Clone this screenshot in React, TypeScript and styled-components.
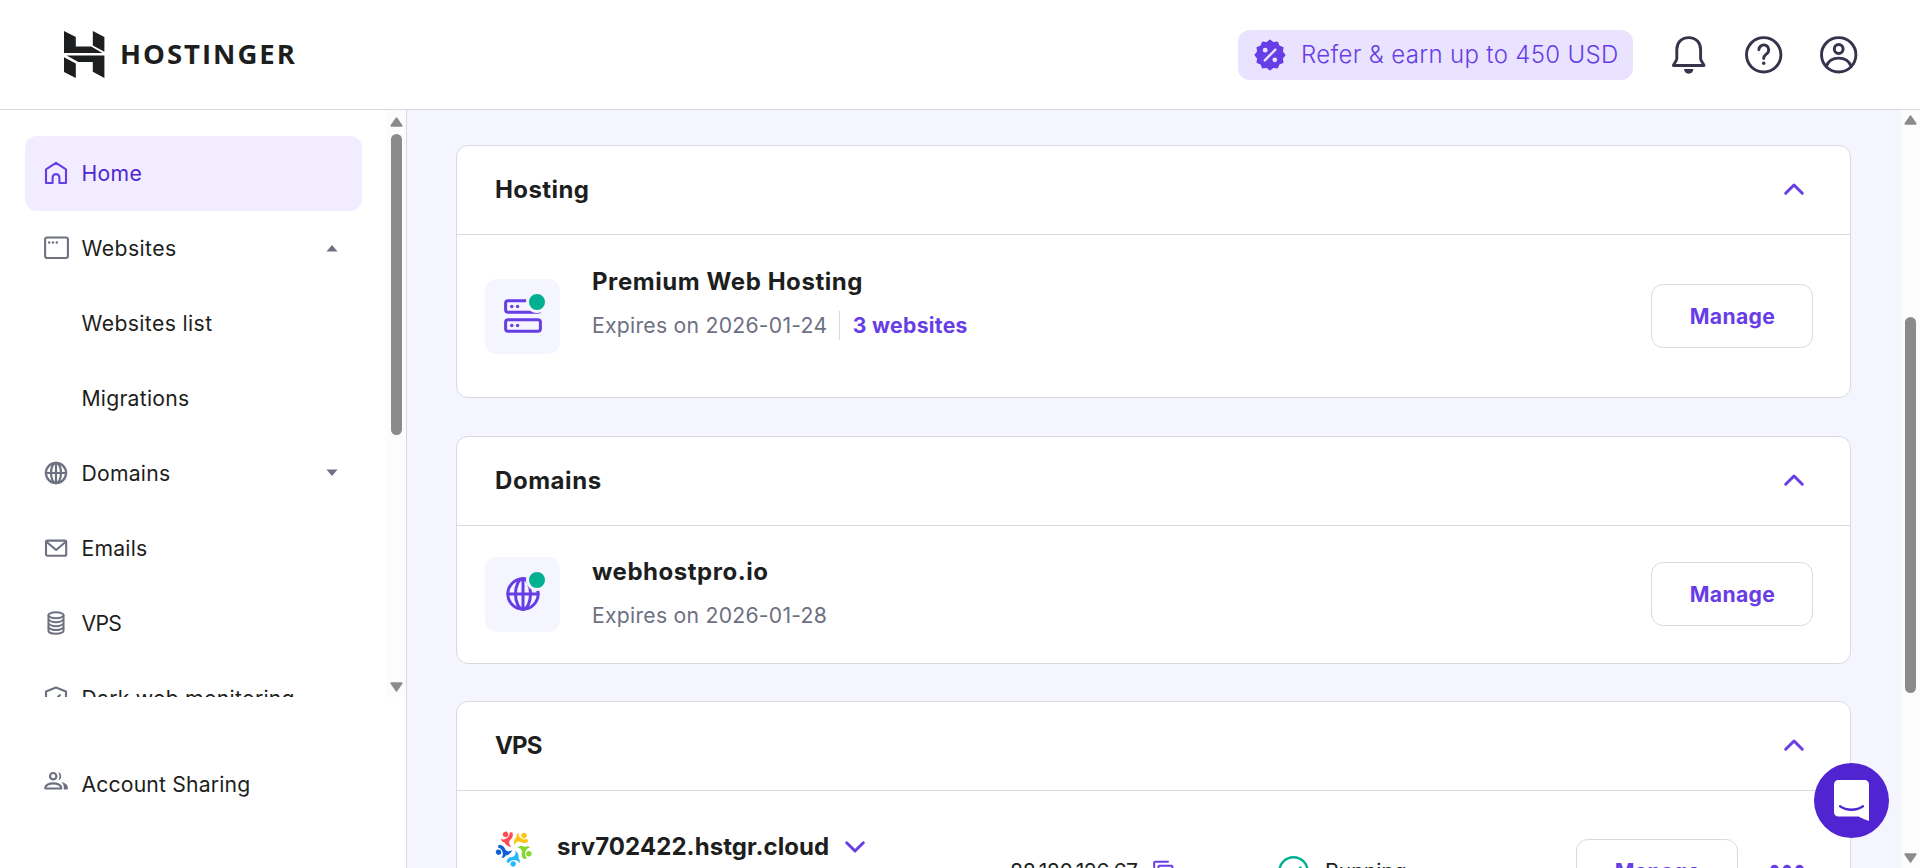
import React from "react";
import styled, { createGlobalStyle } from "styled-components";

const color = {
  primary: "#673de6",
  primaryDark: "#5025d1",
  primaryLight: "#e9e3ff",
  active: "#f1ecff",
  page: "#f4f5ff",
  border: "#d8dae0",
  dark: "#1d1e20",
  gray: "#6d7081",
  icon: "#36344d",
  success: "#00b090",
  track: "#fcfcfc",
  thumb: "#8b8b8b",
};

const GlobalStyle = createGlobalStyle`
  * { box-sizing: border-box; }
  body {
    margin: 0;
    overflow: hidden;
    background: #fff;
    color: ${color.dark};
    font-family: Inter, "Liberation Sans", sans-serif;
  }
  svg { display: block; flex: none; }
`;

const Page = styled.div`
  display: flex;
  flex-direction: column;
  width: 1920px;
  height: 868px;
  overflow: hidden;
`;

const Header = styled.header`
  display: flex;
  align-items: center;
  flex: none;
  height: 110px;
  padding: 0 62px 0 64px;
  border-bottom: 1px solid ${color.border};
`;

const Logo = styled.div`
  display: flex;
  align-items: center;
  gap: 15px;
  font: 700 27.5px/46px "Open Sans", sans-serif;
  letter-spacing: 2px;
`;

const LogoText = styled.span`
  padding-bottom: 2px;
`;

const HeaderActions = styled.div`
  display: flex;
  align-items: center;
  gap: 37px;
  margin-left: auto;
`;

const ReferPill = styled.button`
  display: flex;
  align-items: center;
  width: 395px;
  height: 50px;
  padding: 0 0 0 16px;
  gap: 15px;
  border: 0;
  border-radius: 12px;
  background: ${color.primaryLight};
  color: ${color.primary};
  font: 340 24px/50px Inter, sans-serif;
  letter-spacing: 0.34px;
  white-space: nowrap;
`;

const Body = styled.div`
  display: flex;
  flex: 1;
  min-height: 0;
`;

const Sidebar = styled.aside`
  display: flex;
  flex-direction: column;
  flex: none;
  width: 407px;
  border-right: 1px solid ${color.border};
`;

const NavScroller = styled.div`
  display: flex;
  height: 587px;
  overflow: hidden;
`;

const NavList = styled.nav`
  display: flex;
  flex-direction: column;
  flex: 1;
  padding: 26px 25px 0;
`;

const NavItem = styled.a<{ $active?: boolean; $spacing: number }>`
  display: flex;
  align-items: center;
  flex: none;
  gap: 12.5px;
  height: 75px;
  padding: 0 24px 1px 19px;
  border-radius: 12px;
  background: ${(p) => (p.$active ? color.active : "transparent")};
  color: ${(p) => (p.$active ? color.primaryDark : color.dark)};
  font-size: 21.2px;
  font-weight: 420;
  letter-spacing: ${(p) => p.$spacing}px;
  white-space: nowrap;
`;

const NavIcon = styled.span<{ $active?: boolean; $lift?: boolean }>`
  display: flex;
  width: 25px;
  padding-bottom: ${(p) => (p.$lift ? 6 : 0)}px;
  color: ${(p) => (p.$active ? color.primary : color.gray)};
`;

const NavCaret = styled.span`
  margin-left: auto;
  color: ${color.gray};
`;

const SidebarFooter = styled.div`
  padding: 50px 44px 0 25px;
`;

const Track = styled.div<{ $arrowInset: number }>`
  display: flex;
  flex-direction: column;
  align-items: center;
  flex: none;
  width: 19px;
  padding: ${(p) => p.$arrowInset}px 0 5px;
  background: ${color.track};
  color: ${color.thumb};
`;

const Thumb = styled.div<{ $top: number; $height: number }>`
  width: 11px;
  height: ${(p) => p.$height}px;
  margin: ${(p) => p.$top}px 0 auto;
  border-radius: 6px;
  background: ${color.thumb};
`;

const Main = styled.main`
  flex: 1;
  display: flex;
  flex-direction: column;
  gap: 38px;
  padding: 35px 50px 0 49px;
  background: ${color.page};
  overflow: hidden;
`;

const Card = styled.section<{ $height: number }>`
  flex: none;
  height: ${(p) => p.$height}px;
  border: 1px solid ${color.border};
  border-radius: 12px;
  background: #fff;
`;

const CardHeader = styled.div<{ $spacing: number }>`
  display: flex;
  align-items: center;
  justify-content: space-between;
  height: 89px;
  padding: 0 45px 2px 38px;
  border-bottom: 1px solid ${color.border};
  font-size: 24px;
  font-weight: 650;
  letter-spacing: ${(p) => p.$spacing}px;
`;

const ServiceRow = styled.div<{ $height: number; $lift?: number }>`
  display: flex;
  align-items: center;
  height: ${(p) => p.$height}px;
  padding: 0 37px ${(p) => p.$lift ?? 0}px 28px;
`;

const IconTile = styled.div`
  position: relative;
  display: flex;
  align-items: center;
  justify-content: center;
  width: 75px;
  height: 75px;
  margin-right: 32px;
  border-radius: 12px;
  background: ${color.page};
  color: ${color.primary};
`;

const StatusDot = styled.span`
  position: absolute;
  top: 12px;
  right: 12px;
  width: 22px;
  height: 22px;
  border: 3px solid ${color.page};
  border-radius: 50%;
  background: ${color.success};
`;

const ServiceInfo = styled.div<{ $lift: number }>`
  display: flex;
  flex-direction: column;
  gap: 7px;
  margin-right: auto;
  padding-bottom: ${(p) => p.$lift}px;
`;

const ServiceTitle = styled.div<{ $spacing: number }>`
  font-size: 24px;
  font-weight: 650;
  line-height: 36px;
  letter-spacing: ${(p) => p.$spacing}px;
  white-space: nowrap;
`;

const ServiceMeta = styled.div`
  display: flex;
  align-items: center;
  height: 36px;
  color: ${color.gray};
  font-size: 21.2px;
  letter-spacing: 0.25px;
`;

const MetaLink = styled.a`
  margin-left: 12px;
  padding-left: 12.5px;
  border-left: 1px solid ${color.border};
  color: ${color.primary};
  font-weight: 650;
  line-height: 29px;
  letter-spacing: 0.28px;
`;

const ManageButton = styled.button`
  width: 162px;
  height: 64px;
  padding: 0 0 1px 1px;
  border: 1px solid ${color.border};
  border-radius: 12px;
  background: #fff;
  color: ${color.primary};
  font: 650 21.2px Inter, sans-serif;
  letter-spacing: 0.3px;
`;

const VpsCard = styled(Card)`
  margin-top: -1px;
`;

const VpsRow = styled.div`
  display: flex;
  align-items: center;
  height: 160px;
  padding: 0 46px 0 38px;
`;

const VpsName = styled.div`
  display: flex;
  align-items: center;
  gap: 15px;
  width: 453px;
  margin-left: 24px;
  padding-bottom: 48px;
`;

const VpsLogo = styled.div`
  display: flex;
  padding-bottom: 47px;
`;

const VpsAddress = styled.div`
  display: flex;
  align-items: center;
  gap: 14px;
  width: 268px;
  font-size: 21.2px;
  letter-spacing: -0.45px;
`;

const VpsStatus = styled.div`
  display: flex;
  align-items: center;
  gap: 16px;
  width: 298px;
  font-size: 21.2px;
`;

const MoreButton = styled.span`
  margin-left: auto;
  padding-bottom: 4px;
  color: ${color.primary};
`;

const ChatLauncher = styled.button`
  position: fixed;
  left: 1814px;
  top: 763px;
  display: flex;
  align-items: center;
  justify-content: center;
  width: 75px;
  height: 75px;
  padding: 0;
  border: 0;
  border-radius: 50%;
  background: ${color.primaryDark};
`;

const stroke = (width: number) => ({
  fill: "none",
  stroke: "currentColor",
  strokeWidth: width,
  strokeLinecap: "round" as const,
  strokeLinejoin: "round" as const,
});

const LogoMark = () => (
  <svg width="41" height="47" viewBox="0 0 41 47" fill={color.dark}>
    <path d="M0 0l11.8 6v9.4h15.4L38.4 22H0z" />
    <path d="M28.8 0l11.6 6v14.8l-11.6-6.2z" />
    <path d="M2.6 24.6h37.8V47l-11.6-6.2v-9.9H14.3z" />
    <path d="M0 26.2l11.8 6.3V47L0 41z" />
  </svg>
);

const badgePoints = Array.from({ length: 24 }, (_, i) => {
  const r = i % 2 ? 12.6 : 14.8;
  const a = (i * Math.PI) / 12 - Math.PI / 2;
  return `${(16 + r * Math.cos(a)).toFixed(2)},${(16 + r * Math.sin(a)).toFixed(2)}`;
}).join(" ");

const DiscountIcon = () => (
  <svg width="32" height="32" viewBox="0 0 32 32">
    <polygon points={badgePoints} fill={color.primary} stroke={color.primary} strokeWidth="1.4" strokeLinejoin="round" />
    <path d="M10.8 21.4L21.4 10.6" stroke={color.primaryLight} strokeWidth="2.4" strokeLinecap="round" />
    <circle cx="11.2" cy="11.2" r="2.4" fill={color.primaryLight} />
    <circle cx="20.8" cy="20.8" r="2.4" fill={color.primaryLight} />
  </svg>
);

const BellIcon = () => (
  <svg width="38" height="38" viewBox="0 0 38 38" color={color.icon}>
    <path d="M18.700 1.600c-7.400 0-11.900 5.200-11.900 12v9.200c0 2-3.400 5.600-3.400 6.700h30.600c0-1.100-3.400-4.700-3.400-6.700v-9.200c0-6.800-4.500-12-11.900-12z" {...stroke(2.9)} />
    <path d="M14 33h9.400a4.700 4.700 0 0 1-9.400 0z" fill="currentColor" />
  </svg>
);

const HelpIcon = () => (
  <svg width="38" height="38" viewBox="0 0 38 38" color={color.icon}>
    <circle cx="18.700" cy="18.800" r="17.200" {...stroke(2.9)} />
    <path d="M13.900 13.800a4.900 4.900 0 1 1 8 3.800c-1.900 1.500-3.200 2.300-3.200 5" {...stroke(2.9)} />
    <circle cx="18.700" cy="27.200" r="1.700" fill="currentColor" />
  </svg>
);

const UserIcon = () => (
  <svg width="38" height="38" viewBox="0 0 38 38" color={color.icon}>
    <circle cx="18.700" cy="18.800" r="17.200" {...stroke(2.9)} />
    <circle cx="18.700" cy="13" r="4.400" {...stroke(3)} />
    <path d="M6.400 30.100c1.800-5 6.600-8 12.300-8s10.500 3 12.300 8" {...stroke(2.9)} />
  </svg>
);

const HomeIcon = () => (
  <svg width="24" height="24" viewBox="0 0 24 24">
    <path d="M2 8.300L12 1.900l10 6.400v13.700h-6.600v-5.500a3.400 3.400 0 0 0-6.800 0v5.500H2z" {...stroke(2.1)} />
  </svg>
);

const WindowIcon = () => (
  <svg width="25" height="24" viewBox="0 0 25 24">
    <rect x="1.100" y="1.500" width="22.800" height="20.500" rx="2" {...stroke(2.1)} />
    <circle cx="5.200" cy="6.500" r="1.200" fill="currentColor" />
    <circle cx="9" cy="6.500" r="1.200" fill="currentColor" />
    <circle cx="12.800" cy="6.500" r="1.200" fill="currentColor" />
  </svg>
);

const GlobeIcon = ({ size = 24, width = 2.2 }: { size?: number; width?: number }) => (
  <svg width={size} height={size} viewBox="0 0 24 24">
    <g {...stroke(width)}>
      <circle cx="12" cy="12" r="10.100" />
      <ellipse cx="12" cy="12" rx="5" ry="10.100" />
      <path d="M12 1.900v20.200M1.900 12h20.200" />
    </g>
  </svg>
);

const MailIcon = () => (
  <svg width="24" height="24" viewBox="0 0 24 24">
    <rect x="2" y="4.600" width="20.200" height="15.200" rx="1.500" {...stroke(2.1)} />
    <path d="M2.400 5.800l9.700 8.200 9.700-8.200" {...stroke(2.1)} />
  </svg>
);

const DatabaseIcon = () => (
  <svg width="24" height="24" viewBox="0 0 24 24">
    <g {...stroke(1.900)}>
      <ellipse cx="12" cy="4.200" rx="7.600" ry="3" />
      <path d="M4.400 4.200v15.600c0 1.700 3.400 3 7.600 3s7.600-1.300 7.600-3V4.200" />
      <path d="M4.800 8.800c1 1.500 3.800 2.400 7.200 2.400s6.200-.9 7.200-2.400M4.800 12.800c1 1.500 3.800 2.400 7.200 2.400s6.200-.9 7.200-2.400M4.800 16.600c1 1.500 3.800 2.400 7.200 2.400s6.200-.9 7.200-2.400" />
    </g>
  </svg>
);

const ShieldIcon = () => (
  <svg width="24" height="24" viewBox="0 0 24 24">
    <path d="M12 1.600L2 5.400V12c0 5 4 8.500 10 10.600C18 20.500 22 17 22 12V5.400z" {...stroke(2.1)} />
    <path d="M8 12l2.600 2.600 5.200-5.400" {...stroke(2.100)} />
  </svg>
);

const PeopleIcon = () => (
  <svg width="24" height="20" viewBox="0 0 24 20">
    <circle cx="9.200" cy="5.200" r="3.200" {...stroke(2.2)} />
    <path d="M1.400 17.500h15.800v-1c0-2.600-4-4.200-7.900-4.200s-7.900 1.600-7.900 4.200z" {...stroke(2.2)} />
    <path d="M14.300 1.200a4.200 4.200 0 0 1 0 8c1.500-2.400 1.500-5.600 0-8zM17.200 11c3.500.8 6.600 2.600 6.600 5.200v2.400h-4v-2.400c0-2-1-3.800-2.600-5.200z" fill="currentColor" />
  </svg>
);

const Caret = ({ up = false }: { up?: boolean }) => (
  <svg width="12" height="8" viewBox="0 0 12 8">
    <path d={up ? "M.5 7.500L6 1l5.500 6.500z" : "M.5 .5h11L6 7z"} fill="currentColor" />
  </svg>
);

const ScrollArrow = ({ up = false }: { up?: boolean }) => (
  <svg width="13" height="10" viewBox="0 0 13 10">
    <path d={up ? "M1.300 8.800h10.400L6.500 1.200z" : "M1.300 1.200h10.400L6.500 8.800z"} fill="currentColor" stroke="currentColor" strokeWidth="1.8" strokeLinejoin="round" />
  </svg>
);

const Chevron = ({ up = false }: { up?: boolean }) => (
  <svg width="22" height="14" viewBox="0 0 22 14" color={color.primary}>
    <path d={up ? "M2.700 11.200L11 3l8.300 8.200" : "M2.700 2.800L11 11l8.300-8.200"} {...stroke(3)} />
  </svg>
);

const ServerIcon = () => (
  <svg width="38" height="34" viewBox="0 0 38 34">
    <rect x="1.600" y="1.700" width="34.800" height="11.600" rx="2.500" {...stroke(3)} />
    <rect x="1.600" y="20.700" width="34.800" height="11.600" rx="2.500" {...stroke(3)} />
    <circle cx="7.800" cy="7.500" r="1.700" fill="currentColor" />
    <circle cx="13.600" cy="7.500" r="1.700" fill="currentColor" />
    <circle cx="7.800" cy="26.500" r="1.700" fill="currentColor" />
    <circle cx="13.600" cy="26.500" r="1.700" fill="currentColor" />
  </svg>
);

const figures: [string, number][] = [
  ["#ff4a55", -32],
  ["#ffc412", 39],
  ["#84d72f", 111],
  ["#25b9fa", 183],
  ["#0c5fd6", 255],
];

const TeamLogo = () => (
  <svg width="38" height="38" viewBox="-19 -19 38 38">
    {figures.map(([fill, angle]) => (
      <g key={fill} fill={fill} transform={`rotate(${angle})`}>
        <circle cx="0" cy="-16" r="2.700" />
        <path d="M-6 -14.800C-4.800 -11.200 2.400 -10.800 4.600 -15.600L6.800 -14C6 -9.800 3 -9.200 .6 -8.700C-2 -7.600 -2.200 -5 -1.400 -2.400C-4.600 -4.400 -5.400 -7.400 -5 -10C-6.400 -11.400 -7.200 -12.800 -6 -14.800z" />
      </g>
    ))}
  </svg>
);

const CopyIcon = () => (
  <svg width="23" height="23" viewBox="0 0 23 23" color={color.primary}>
    <path d="M16 1.700H3.200a1 1 0 0 0-1 1V16" {...stroke(2)} />
    <rect x="6.400" y="5.800" width="14" height="15" rx="1" {...stroke(2)} />
  </svg>
);

const CheckCircleIcon = () => (
  <svg width="31" height="31" viewBox="0 0 31 31" color={color.success}>
    <circle cx="15.500" cy="15.500" r="14.200" {...stroke(2.4)} />
    <path d="M9 16.300l4.500 4.500 9-9.300" {...stroke(2.4)} />
  </svg>
);

const MoreIcon = () => (
  <svg width="34" height="10" viewBox="0 0 34 10" fill="currentColor">
    <circle cx="4.500" cy="5" r="4.200" />
    <circle cx="17" cy="5" r="4.200" />
    <circle cx="29.500" cy="5" r="4.200" />
  </svg>
);

const ChatIcon = () => (
  <svg width="35" height="41" viewBox="0 0 35 41">
    <path d="M4.300 0h26.400A4.300 4.300 0 0 1 35 4.300V41s-6-1.900-10.300-4.400H4.300A4.300 4.300 0 0 1 0 32.300v-28A4.300 4.300 0 0 1 4.300 0z" fill="#fff" />
    <path d="M6 26.300c6.600 4.600 16.400 4.600 23 0" fill="none" stroke={color.primaryDark} strokeWidth="2.300" strokeLinecap="round" />
  </svg>
);

type NavEntry = {
  label: string;
  spacing: number;
  icon?: React.ReactNode;
  active?: boolean;
  caret?: "up" | "down";
};

const navEntries: NavEntry[] = [
  { label: "Home", spacing: 0.3, icon: <HomeIcon />, active: true },
  { label: "Websites", spacing: 0.42, icon: <WindowIcon />, caret: "up" },
  { label: "Websites list", spacing: 0.38, icon: null },
  { label: "Migrations", spacing: 0.22, icon: null },
  { label: "Domains", spacing: 0.22, icon: <GlobeIcon />, caret: "down" },
  { label: "Emails", spacing: 0.22, icon: <MailIcon /> },
  { label: "VPS", spacing: -0.7, icon: <DatabaseIcon /> },
  { label: "Dark web monitoring", spacing: 0.25, icon: <ShieldIcon /> },
];

export default function App() {
  return (
    <Page>
      <GlobalStyle />
      <Header>
        <Logo>
          <LogoMark />
          <LogoText>HOSTINGER</LogoText>
        </Logo>
        <HeaderActions>
          <ReferPill>
            <DiscountIcon />
            Refer &amp; earn up to 450 USD
          </ReferPill>
          <BellIcon />
          <HelpIcon />
          <UserIcon />
        </HeaderActions>
      </Header>
      <Body>
        <Sidebar>
          <NavScroller>
            <NavList>
              {navEntries.map((entry) => (
                <NavItem key={entry.label} $active={entry.active} $spacing={entry.spacing}>
                  <NavIcon $active={entry.active}>{entry.icon}</NavIcon>
                  {entry.label}
                  {entry.caret && (
                    <NavCaret>
                      <Caret up={entry.caret === "up"} />
                    </NavCaret>
                  )}
                </NavItem>
              ))}
            </NavList>
            <Track $arrowInset={7}>
              <ScrollArrow up />
              <Thumb $top={7} $height={301} />
              <ScrollArrow />
            </Track>
          </NavScroller>
          <SidebarFooter>
            <NavItem $spacing={0.16}>
              <NavIcon $lift>
                <PeopleIcon />
              </NavIcon>
              Account Sharing
            </NavItem>
          </SidebarFooter>
        </Sidebar>
        <Main>
          <Card $height={253}>
            <CardHeader $spacing={0.4}>
              Hosting
              <Chevron up />
            </CardHeader>
            <ServiceRow $height={162}>
              <IconTile>
                <ServerIcon />
                <StatusDot />
              </IconTile>
              <ServiceInfo $lift={25}>
                <ServiceTitle $spacing={0.57}>Premium Web Hosting</ServiceTitle>
                <ServiceMeta>
                  Expires on 2026-01-24
                  <MetaLink>3 websites</MetaLink>
                </ServiceMeta>
              </ServiceInfo>
              <ManageButton>Manage</ManageButton>
            </ServiceRow>
          </Card>
          <Card $height={228}>
            <CardHeader $spacing={0.55}>
              Domains
              <Chevron up />
            </CardHeader>
            <ServiceRow $height={137} $lift={1}>
              <IconTile>
                <GlobeIcon size={36} width={2} />
                <StatusDot />
              </IconTile>
              <ServiceInfo $lift={1}>
                <ServiceTitle $spacing={0.52}>webhostpro.io</ServiceTitle>
                <ServiceMeta>Expires on 2026-01-28</ServiceMeta>
              </ServiceInfo>
              <ManageButton>Manage</ManageButton>
            </ServiceRow>
          </Card>
          <VpsCard $height={251}>
            <CardHeader $spacing={-0.8}>
              VPS
              <Chevron up />
            </CardHeader>
            <VpsRow>
              <VpsLogo>
                <TeamLogo />
              </VpsLogo>
              <VpsName>
                <ServiceTitle $spacing={0.07}>srv702422.hstgr.cloud</ServiceTitle>
                <Chevron />
              </VpsName>
              <VpsAddress>
                88.180.126.67
                <CopyIcon />
              </VpsAddress>
              <VpsStatus>
                <CheckCircleIcon />
                Running
              </VpsStatus>
              <ManageButton>Manage</ManageButton>
              <MoreButton>
                <MoreIcon />
              </MoreButton>
            </VpsRow>
          </VpsCard>
        </Main>
        <Track $arrowInset={5}>
          <ScrollArrow up />
          <Thumb $top={192} $height={376} />
          <ScrollArrow />
        </Track>
      </Body>
      <ChatLauncher>
        <ChatIcon />
      </ChatLauncher>
    </Page>
  );
}
